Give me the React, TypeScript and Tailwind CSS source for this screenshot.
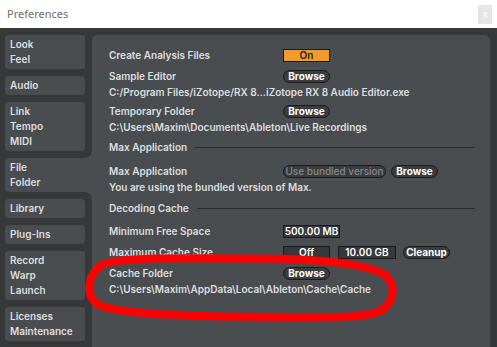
import type { ReactNode } from "react";

const tabs = [
  { lines: ["Look", "Feel"] },
  { lines: ["Audio"] },
  { lines: ["Link", "Tempo", "MIDI"] },
  { lines: ["File", "Folder"], active: true },
  { lines: ["Library"] },
  { lines: ["Plug-Ins"] },
  { lines: ["Record", "Warp", "Launch"] },
  { lines: ["Licenses", "Maintenance"] },
];

function Pill({ children, w, disabled }: { children: ReactNode; w: string; disabled?: boolean }) {
  return (
    <div
      className={`${w} h-[13px] flex items-center justify-center whitespace-nowrap rounded-full border border-[#1a1b1c] bg-[#3a3c3f] text-[10px] leading-none ${
        disabled ? "text-[#85888b] font-medium" : "text-white font-bold"
      }`}
    >
      {children}
    </div>
  );
}

function Box({ children, w, orange }: { children: ReactNode; w: string; orange?: boolean }) {
  return (
    <div
      className={`${w} h-[13px] flex items-center justify-center whitespace-nowrap border border-[#1a1b1c] text-[10px] leading-none font-semibold ${
        orange ? "bg-[#f39a2b] text-[#1e1e1e]" : "bg-[#36383b] text-white"
      }`}
    >
      {children}
    </div>
  );
}

function Row({ label, children, className = "" }: { label: string; children?: ReactNode; className?: string }) {
  return (
    <div className={`flex items-center h-4 ${className}`}>
      <div className="w-[174px] shrink-0">{label}</div>
      <div className="flex items-center gap-[5px]">{children}</div>
    </div>
  );
}

function Header({ label, className = "" }: { label: string; className?: string }) {
  return (
    <div className={`flex items-center h-4 gap-2 ${className}`}>
      <span>{label}</span>
      <div className="flex-1 h-px bg-[#2c2e30]" />
    </div>
  );
}

export default function App() {
  return (
    <div className="w-[497px] h-[347px] overflow-hidden relative bg-[#36383a]" style={{ fontFamily: "Inter, 'Noto Sans', sans-serif" }}>
      {/* title bar */}
      <div className="h-[28px] bg-white flex items-center justify-between pl-[7px] pr-[5px]">
        <span className="text-[11px] text-[#6e6e6e] font-normal" style={{ fontFamily: "'Noto Sans', sans-serif" }}>
          Preferences
        </span>
        <div className="w-[14px] h-[19px] bg-[#e6e6e6] flex items-center justify-center text-[9px] text-[#fafafa] font-bold">
          x
        </div>
      </div>

      <div className="flex pt-[7px] pl-[5px] pr-[7px] text-[#dcdedf] text-[10px] font-semibold">
        {/* sidebar */}
        <div className="flex flex-col gap-[7px] w-[87px] shrink-0">
          {tabs.map((t) => (
            <div key={t.lines.join()} className="relative">
              <div
                className={`bg-[#4a4d50] py-[2px] pl-[5px] leading-[15px] ${
                  t.active ? "w-[87px] rounded-l-[4px]" : "w-[80px] rounded-[4px]"
                }`}
              >
                {t.lines.map((l) => (
                  <div key={l}>{l}</div>
                ))}
              </div>
              {t.active && (
                <>
                  <div
                    className="absolute left-[80px] top-[-7px] w-[7px] h-[7px]"
                    style={{ background: "radial-gradient(circle at 0 0, #36383a 6.5px, #4a4d50 7px)" }}
                  />
                  <div
                    className="absolute left-[80px] bottom-[-7px] w-[7px] h-[7px]"
                    style={{ background: "radial-gradient(circle at 0 100%, #36383a 6.5px, #4a4d50 7px)" }}
                  />
                </>
              )}
            </div>
          ))}
        </div>

        {/* main panel */}
        <div className="flex-1 h-[330px] bg-[#4a4d50] rounded-tr-[6px] rounded-tl-[5px] pl-[17px] pr-[15px] pt-[12px]">
          <Row label="Create Analysis Files">
            <Box w="w-[47px]" orange>
              On
            </Box>
          </Row>
          <Row label="Sample Editor" className="mt-[5px]">
            <Pill w="w-[47px]">Browse</Pill>
          </Row>
          <div className="h-4 flex items-center whitespace-nowrap">
            C:/Program Files/iZotope/RX 8...iZotope RX 8 Audio Editor.exe
          </div>
          <Row label="Temporary Folder" className="mt-[3px]">
            <Pill w="w-[47px]">Browse</Pill>
          </Row>
          <div className="h-4 flex items-center whitespace-nowrap">C:\Users\Maxim\Documents\Ableton\Live Recordings</div>

          <Header label="Max Application" className="mt-[4px]" />
          <Row label="Max Application" className="mt-[8px]">
            <Pill w="w-[103px]" disabled>
              Use bundled version
            </Pill>
            <Pill w="w-[47px]">Browse</Pill>
          </Row>
          <div className="h-4 flex items-center">You are using the bundled version of Max.</div>

          <Header label="Decoding Cache" className="mt-[5px]" />
          <Row label="Minimum Free Space" className="mt-[7px]">
            <Box w="w-[57px]">500.00 MB</Box>
          </Row>
          <Row label="Maximum Cache Size" className="mt-[5px]">
            <Box w="w-[47px]">Off</Box>
            <div className="ml-[3px]">
              <Box w="w-[58px]">10.00 GB</Box>
            </div>
            <div className="ml-[2px]">
              <Pill w="w-[47px]">Cleanup</Pill>
            </div>
          </Row>
          <Row label="Cache Folder" className="mt-[5px]">
            <Pill w="w-[47px]">Browse</Pill>
          </Row>
          <div className="h-4 flex items-center whitespace-nowrap">C:\Users\Maxim\AppData\Local\Ableton\Cache\Cache</div>
        </div>
      </div>

      {/* hand-drawn annotation */}
      <svg className="absolute inset-0 pointer-events-none" width="497" height="347" viewBox="0 0 497 347">
        <path
          d="M 100 266 C 112 256, 200 258, 280 259 C 330 260, 368 265, 385 275 C 396 284, 395 300, 382 310 C 368 318, 330 318, 250 317 C 180 316, 110 314, 96 303 C 85 294, 88 275, 100 266 Z"
          fill="none"
          stroke="#ff0000"
          strokeWidth="8"
          strokeLinecap="round"
          strokeLinejoin="round"
        />
      </svg>
    </div>
  );
}
